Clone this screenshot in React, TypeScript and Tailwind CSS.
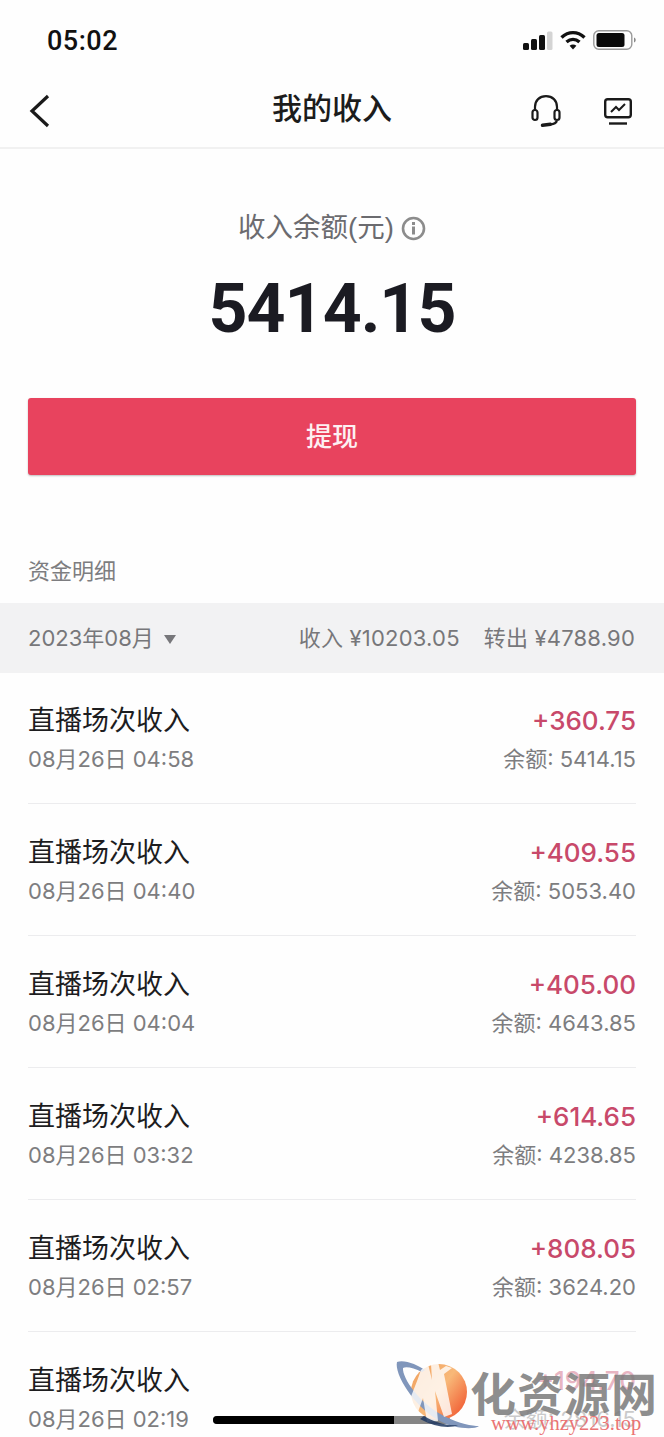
const sans = "font-['Liberation_Sans','Noto_Sans_CJK_SC',sans-serif]";
const figures = "font-['Inter','Noto_Sans_CJK_SC',sans-serif]";

type IncomeRow = {
  time: string;
  amount: string;
  balance: string;
  faded?: boolean;
};

const rows: IncomeRow[] = [
  { time: '08月26日 04:58', amount: '+360.75', balance: '5414.15' },
  { time: '08月26日 04:40', amount: '+409.55', balance: '5053.40' },
  { time: '08月26日 04:04', amount: '+405.00', balance: '4643.85' },
  { time: '08月26日 03:32', amount: '+614.65', balance: '4238.85' },
  { time: '08月26日 02:57', amount: '+808.05', balance: '3624.20' },
  { time: '08月26日 02:19', amount: '+194.70', balance: '2816.15', faded: true },
];

function StatusIcons() {
  return (
    <div className="mt-[-3px] flex items-center gap-[7px]">
      <svg width="31" height="19" viewBox="0 0 31 19">
        <rect x="1" y="12" width="6" height="7" rx="1.500" fill="#111" />
        <rect x="9" y="8" width="6" height="11" rx="1.500" fill="#111" />
        <rect x="17" y="4" width="6" height="15" rx="1.500" fill="#111" />
        <rect x="25" y="0.500" width="5.500" height="18.500" rx="1.500" fill="#d4d4d4" />
      </svg>
      <svg width="26" height="20" viewBox="0 0 26 20" fill="none" stroke="#111" strokeWidth="3.400">
        <path d="M1.500 7.500C8.500 1 17.500 1 24.500 7.500" />
        <path d="M6.500 12C10.500 8.500 15.500 8.500 19.500 12" />
        <path d="M13 19.500l-3.400-3.800c2-1.500 4.800-1.500 6.800 0z" fill="#111" stroke="none" />
      </svg>
      <svg width="43" height="20" viewBox="0 0 43 20">
        <rect x="0.800" y="0.800" width="38" height="18.400" rx="5" fill="none" stroke="#9a9a9a" strokeWidth="1.400" />
        <rect x="3.500" y="3" width="28" height="14" rx="2.500" fill="#0a0a0a" />
        <path d="M41 7.500c1.300.5 1.700 1.400 1.700 2.500s-.4 2-1.700 2.500z" fill="#8a8a8a" />
      </svg>
    </div>
  );
}

function Watermark() {
  return (
    <div className="absolute left-[394px] top-[1358px] h-[79px] w-[270px]">
      <svg width="90" height="72" viewBox="0 0 90 72" className="absolute left-0 top-0">
        <defs>
          <linearGradient id="planet" x1="0.900" y1="0.800" x2="0.100" y2="0.200">
            <stop offset="0" stopColor="#f2683c" />
            <stop offset="0.500" stopColor="#f8b878" />
            <stop offset="1" stopColor="#f2a765" />
          </linearGradient>
        </defs>
        <circle cx="45" cy="34" r="28" fill="url(#planet)" />
        <path d="M3 4C10 1 24 7 31 12L28 14C20 10 12 8 9 10 8 20 26 46 50 58 66 66 78 68 85 68 80 72 60 71 44 62 20 48 0 16 3 4z" fill="#8096bb" />
        <path d="M27 12c-4 12-10 26-12 32l9 10 5-14 4 24 11-1-3-30 9 26 8-3-8-40 8-6-6-2-6 4-3-12-6 6 1 16-4-16z" fill="#ffffff" fillOpacity="0.800" />
        <path d="M30 58c10 6 22 10 34 9-8 4-24 2-38-6z" fill="#1e3760" fillOpacity="0.850" />
      </svg>
      <span className="absolute left-[76px] top-[6px] whitespace-nowrap text-[46px] font-bold leading-[54px] tracking-[1px] text-[#7a7a7a]/85 font-['Noto_Sans_CJK_SC',sans-serif]">
        化资源网
      </span>
      <span className="absolute left-[97px] top-[53px] whitespace-nowrap text-[20.500px] leading-[24px] text-[#ea7474] font-['Liberation_Serif',serif]">
        www.yhzy223.top
      </span>
    </div>
  );
}

export default function App() {
  return (
    <div className={`relative h-[1437px] w-[664px] overflow-hidden bg-[#fefefe] text-[#1c1c1e] ${sans}`}>
      <div className="flex h-[75px] items-center justify-between pl-[47px] pr-[28px] pt-[8px]">
        <span className="text-[27px] font-medium tracking-[0.500px] text-[#111] font-['Roboto',sans-serif]">05:02</span>
        <StatusIcons />
      </div>

      <div className="flex h-[74px] items-center justify-between border-b-2 border-[#f1f1f1] pl-[29px] pr-[32px]">
        <svg width="22" height="34" viewBox="0 0 22 34" fill="none" stroke="#1a1a1a" strokeWidth="3.200">
          <path d="M19 2L3 17l16 15" />
        </svg>
        <div className="flex items-center gap-[43px]">
          <svg width="30" height="32" viewBox="0 0 30 32" fill="none" stroke="#1a1a1a" strokeWidth="2.200">
            <path d="M4 15v-3C4 5.500 8.500 1.200 15 1.200S26 5.500 26 12v3" />
            <rect x="1.500" y="15" width="5" height="10" rx="2.500" />
            <rect x="23.500" y="15" width="5" height="10" rx="2.500" />
            <path d="M26 26c-1 2-3 3-6 3.500" />
            <path d="M11.500 30.200l8-1" strokeWidth="3.400" strokeLinecap="round" />
          </svg>
          <svg width="28" height="27" viewBox="0 0 28 27" fill="none" stroke="#1a1a1a" strokeWidth="2.400">
            <rect x="1.200" y="1.200" width="25.600" height="18" rx="2.500" />
            <path d="M7 14l5-5 3 3 6-6" strokeWidth="2" />
            <path d="M5 25.500h18" />
          </svg>
        </div>
      </div>

      <h1 className="absolute left-0 right-0 top-[89px] text-center text-[30px] font-medium leading-[40px] text-[#1c1c1c]">我的收入</h1>

      <div className="flex flex-col items-center pt-[62px]">
        <div className="flex h-[34px] items-center gap-[7px]">
          <span className="text-[27.500px] leading-[34px] text-[#6b6b6f]">收入余额(元)</span>
          <svg width="25" height="25" viewBox="0 0 25 25" fill="none">
            <circle cx="12.500" cy="12.500" r="10.500" stroke="#8c8c8c" strokeWidth="2.600" />
            <rect x="11" y="10.500" width="3" height="8" fill="#8c8c8c" />
            <rect x="11" y="6" width="3" height="3" fill="#8c8c8c" />
          </svg>
        </div>
        <div className="mt-[22px] text-[68px] font-bold leading-[84px] tracking-[-1px] text-[#1b1b22] font-['Roboto',sans-serif]">5414.15</div>
      </div>

      <div className="mx-[28px] mt-[47px] flex h-[77px] items-center justify-center rounded-[3px] bg-[#e8435e] pt-[2px] text-[26px] font-medium text-[#fdf0f2] shadow-[0_1px_2px_rgba(0,0,0,0.25)]">
        提现
      </div>

      <div className="mt-[80px] pl-[28px] text-[22px] leading-[34px] text-[#7d7d80]">资金明细</div>

      <div className={`mt-[14px] flex h-[70px] items-center justify-between bg-[#f2f2f3] pl-[28px] pr-[29px] text-[22px] text-[#77777a] ${figures}`}>
        <div className="flex items-center gap-[10px]">
          <span>2023年08月</span>
          <span className="mt-[2px] h-0 w-0 border-x-[6px] border-t-[9px] border-x-transparent border-t-[#77777a]" />
        </div>
        <div className="flex gap-[24px] tracking-[0.200px]">
          <span>收入 ¥10203.05</span>
          <span>转出 ¥4788.90</span>
        </div>
      </div>

      <div className="-mt-[1px] px-[28px]">
        {rows.map((row) => (
          <div key={row.time} className="flex h-[132px] items-start justify-between border-b border-[#ececee] pt-[29px] last:border-b-0">
            <div>
              <div className="text-[27px] leading-[41px] text-[#1d1d1f]">直播场次收入</div>
              <div className={`text-[22px] leading-[34px] text-[#7d7d80] ${figures}`}>{row.time}</div>
            </div>
            <div className={`text-right ${figures}`}>
              <div className={`text-[26px] font-medium leading-[39px] text-[#c8496a] ${row.faded ? 'opacity-40' : ''}`}>{row.amount}</div>
              <div className={`text-[22px] leading-[38px] text-[#7d7d80] ${row.faded ? 'opacity-40' : ''}`}>余额: {row.balance}</div>
            </div>
          </div>
        ))}
      </div>

      <div className="absolute left-[213px] top-[1416px] flex h-[8px] w-[237px] overflow-hidden rounded-full bg-[#858585]">
        <div className="h-full w-[181px] bg-black" />
      </div>
      <Watermark />
    </div>
  );
}
